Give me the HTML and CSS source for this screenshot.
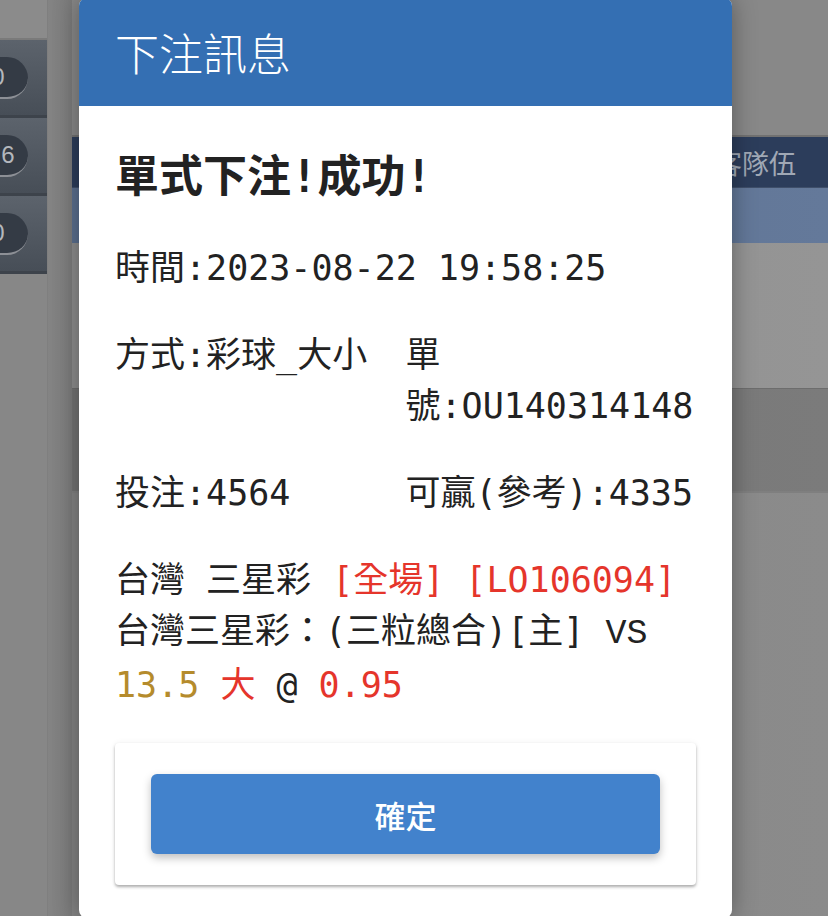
FILE: index.html
```html
<!DOCTYPE html>
<html lang="zh-TW">

<head>
    <meta charset="UTF-8">
    <meta name="viewport" content="width=device-width, initial-scale=1.0">
    <title>下注訊息</title>
    <link rel="stylesheet" href="styles.css">
</head>

<body>
    <!-- 背景頁面（已被遮罩變暗） -->
    <div class="page">
        <div class="side-menu">
            <div class="side-top"></div>
            <div class="side-tile"><span class="pill">0</span></div>
            <div class="side-tile"><span class="pill">1.6</span></div>
            <div class="side-tile"><span class="pill">0</span></div>
        </div>
        <div class="side-gap"></div>
        <div class="main">
            <div class="main-top"></div>
            <div class="table-head">
                <span></span>
                <span>客隊伍</span>
            </div>
            <div class="table-sub"></div>
            <div class="table-row"></div>
            <div class="table-row dark"></div>
            <div class="table-rest"></div>
        </div>
    </div>

    <!-- 彈窗 -->
    <div class="dialog">
        <div class="dialog-title">下注訊息</div>
        <div class="dialog-body">
            <h3 class="result">單式下注!成功!</h3>
            <p>時間:2023-08-22 19:58:25</p>
            <div class="two-col">
                <span>方式:彩球_大小</span>
                <span>單號:OU140314148</span>
            </div>
            <div class="two-col">
                <span>投注:4564</span>
                <span>可贏(參考):4335</span>
            </div>
            <p class="match">
                台灣 三星彩 <span class="red">[全場] [LO106094]</span><br>
                台灣三星彩：(三粒總合)[主] <span class="vs">VS</span><br>
                <span class="gold">13.5</span> <span class="red">大</span> @ <span class="red">0.95</span>
            </p>
            <div class="btn-card">
                <button class="ok-btn">確定</button>
            </div>
        </div>
    </div>
</body>

</html>
```

FILE: styles.css
```css
 /* 整體 */
 body {
     margin: 0;
     width: 828px;
     height: 916px;
     overflow: hidden;
     position: relative;
     background-color: #888;
     font-family: "DejaVu Sans Mono", "Noto Sans CJK TC", monospace;
 }

 /* 背景頁面 */
.page {
     display: grid;
     grid-template-columns: 48px 24px 1fr;
     height: 916px;
 }

.side-menu {
     background-color: #878787;
     border-right: 1px solid #7f7f7f;
 }

.side-top {
     height: 38px;
     background-color: #8b8b8b;
     border-bottom: 2px solid #7a7a7a;
 }

.side-tile {
     height: 75px;
     display: flex;
     align-items: center;
     background: linear-gradient(#5c636c, #474e57);
     border-bottom: 3px solid #3d434b;
     overflow: hidden;
 }

.pill {
     width: 60px;
     height: 42px;
     margin-left: -32px;
     box-sizing: border-box;
     border-radius: 21px;
     background-color: #343b45;
     border-bottom: 2px solid #8d9096;
     color: #b4b8bd;
     font-family: "Liberation Sans", sans-serif;
     font-size: 24px;
     line-height: 40px;
     text-align: center;
 }

.side-gap {
     background: linear-gradient(to right, #848484, #7b7b7b);
 }

.main {
     display: flex;
     flex-direction: column;
 }

.main-top {
     height: 135px;
     background-color: #888;
     border-bottom: 2px solid #717171;
 }

.table-head {
     height: 50px;
     display: grid;
     grid-template-columns: 643px 1fr;
     align-items: center;
     background-color: #2c3d5b;
     border-bottom: 1px solid #3f4f6a;
     color: #a0a8b5;
     font-family: "Noto Sans CJK TC", sans-serif;
     font-size: 27px;
 }

.table-sub {
     height: 55px;
     background: linear-gradient(to right, #5b6f8e, #64799a);
 }

.table-row {
     height: 145px;
     background: linear-gradient(to right, #8c8c8c, #959595);
     border-bottom: 1px solid #6d6d6d;
 }

.table-row.dark {
     height: 102px;
     background: linear-gradient(to right, #737373, #7b7b7b);
     border-bottom: 2px solid #7f7f7f;
 }

.table-rest {
     flex: 1;
     background: linear-gradient(to right, #838383, #8b8b8b);
 }

 /* 彈窗 */
.dialog {
     position: absolute;
     top: -2px;
     left: 79px;
     width: 653px;
     height: 920px;
     background-color: white;
     border-radius: 8px;
     overflow: hidden;
     box-shadow: 0 0 24px rgba(0, 0, 0, 0.35);
 }

.dialog-title {
     height: 108px;
     box-sizing: border-box;
     padding-left: 36px;
     background-color: #346fb3;
     color: white;
     font-family: "Noto Sans CJK TC", sans-serif;
     font-size: 44px;
     line-height: 108px;
     font-weight: 300;
 }

.dialog-body {
     padding: 0 36px;
     color: #222;
     font-size: 35px;
     line-height: 51px;
 }

.result {
     margin: 45px 0 40px 0;
     font-size: 44px;
     line-height: 52px;
     font-weight: bold;
 }

.dialog-body p {
     margin: 0 0 36px 0;
 }

.dialog-body p.match {
     margin-bottom: 0;
 }

.two-col {
     display: grid;
     grid-template-columns: 1fr 1fr;
     margin-bottom: 36px;
 }

.red {
     color: #e5352b;
 }

.gold {
     color: #b58b2c;
 }

.vs {
     font-family: "Liberation Mono", monospace;
 }

 /* 確定按鈕區域 */
.btn-card {
     margin-top: 32px;
     padding: 31px 36px;
     border-radius: 4px;
     background-color: white;
     box-shadow: 0 2px 3px rgba(0, 0, 0, 0.3), 0 0 6px rgba(0, 0, 0, 0.06);
 }

.ok-btn {
     display: block;
     width: 100%;
     height: 80px;
     border: none;
     border-radius: 6px;
     background-color: #4282cc;
     color: white;
     font-family: "Noto Sans CJK TC", sans-serif;
     font-size: 31px;
     font-weight: 500;
     box-shadow: 0 4px 8px rgba(0, 0, 0, 0.25);
     cursor: pointer;
 }
```
